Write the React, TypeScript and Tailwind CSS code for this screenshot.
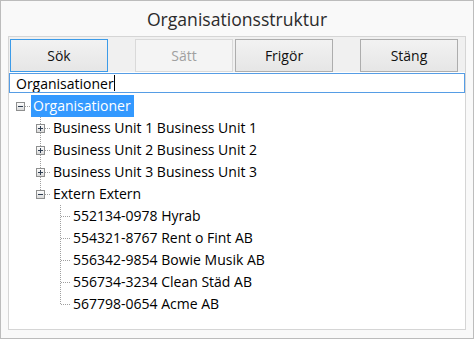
import React from "react";

type Node = {
  label: string;
  level: number;
  expander?: "plus" | "minus";
  last?: boolean;
  selected?: boolean;
};

const nodes: Node[] = [
  { label: "Organisationer", level: 0, expander: "minus", selected: true },
  { label: "Business Unit 1 Business Unit 1", level: 1, expander: "plus" },
  { label: "Business Unit 2 Business Unit 2", level: 1, expander: "plus" },
  { label: "Business Unit 3 Business Unit 3", level: 1, expander: "plus" },
  { label: "Extern Extern", level: 1, expander: "minus", last: true },
  { label: "552134-0978 Hyrab", level: 2 },
  { label: "554321-8767 Rent o Fint AB", level: 2 },
  { label: "556342-9854 Bowie Musik AB", level: 2 },
  { label: "556734-3234 Clean Städ AB", level: 2 },
  { label: "567798-0654 Acme AB", level: 2, last: true },
];

const DOT = "#a0a0a0";

// lines and expander box in front of a tree node
const Connector = ({ node }: { node: Node }) => {
  const cx = 11 + 20 * node.level;
  const w = 22 + 20 * node.level;
  const cy = 11;
  return (
    <svg width={w} height={22} className="shrink-0" shapeRendering="crispEdges">
      <defs>
        <linearGradient id="exp" x1="0" y1="0" x2="0" y2="1">
          <stop offset="0" stopColor="#ffffff" />
          <stop offset="1" stopColor="#d8d8d8" />
        </linearGradient>
      </defs>
      {node.level > 0 && (
        <line
          x1={cx + 0.5}
          y1={0}
          x2={cx + 0.5}
          y2={node.last ? cy + 1 : 22}
          stroke={DOT}
          strokeDasharray="1 1"
        />
      )}
      <line
        x1={node.expander ? cx + 5 : cx + 1}
        y1={cy + 0.5}
        x2={w}
        y2={cy + 0.5}
        stroke={DOT}
        strokeDasharray="1 1"
      />
      {node.expander && (
        <g>
          <rect x={cx - 4 + 0.5} y={cy - 4 + 0.5} width={8} height={8} fill="url(#exp)" stroke="#8e8f8f" />
          <line x1={cx - 2} y1={cy + 0.5} x2={cx + 3} y2={cy + 0.5} stroke="#2d3c50" />
          {node.expander === "plus" && (
            <line x1={cx + 0.5} y1={cy - 2} x2={cx + 0.5} y2={cy + 3} stroke="#2d3c50" />
          )}
        </g>
      )}
    </svg>
  );
};

const Button = ({ label, focused, disabled }: { label: string; focused?: boolean; disabled?: boolean }) => (
  <div
    className={`w-[98px] h-[33px] flex items-center justify-center border text-[14px] ${
      disabled
        ? "border-[#d9d9d9] bg-[#f4f4f4] text-[#a0a0a0]"
        : focused
        ? "border-[#3c9be8] bg-gradient-to-b from-[#f2f2f2] to-[#e6e6e6] text-[#111]"
        : "border-[#adadad] bg-gradient-to-b from-[#f2f2f2] to-[#e6e6e6] text-[#111]"
    }`}
  >
    {label}
  </div>
);

export default function App() {
  return (
    <div
      className="w-[474px] h-[339px] border border-[#bcbcbc] bg-[#f9f9f9] flex flex-col"
      style={{ fontFamily: '"Open Sans", "Noto Sans", sans-serif' }}
    >
      <div className="h-[35px] flex items-center justify-center text-[17.6px] text-[#2b2b2b] pt-[1px]">
        Organisationsstruktur
      </div>
      <div className="mx-[7px] mb-[8px] flex-1 border border-[#d5d5d5] bg-white flex flex-col">
        <div className="bg-[#f0f0f0] pt-[2px] pl-[1px] flex">
          <Button label="Sök" focused />
          <div className="w-[27px]" />
          <Button label="Sätt" disabled />
          <div className="w-[2px]" />
          <Button label="Frigör" />
          <div className="w-[27px]" />
          <Button label="Stäng" />
        </div>
        <div className="h-[20px] mt-[1px] border border-[#569de5] bg-white overflow-hidden flex items-start pl-[6px]">
          <span className="text-[14px] leading-[20px] mt-[0px] text-black whitespace-nowrap">Organisationer</span>
          <span className="w-[1px] h-[16px] bg-black mt-[1px]" />
        </div>
        <div className="pt-[2px] flex flex-col text-[14px] text-black">
          {nodes.map((n, i) => (
            <div key={i} className="h-[22px] flex items-center whitespace-nowrap">
              <Connector node={n} />
              <span
                className={`h-[22px] leading-[22px] pl-[2px] pr-[3px] ${
                  n.selected ? "bg-[#3399ff] text-white" : ""
                }`}
              >
                {n.label}
              </span>
            </div>
          ))}
        </div>
      </div>
    </div>
  );
}
